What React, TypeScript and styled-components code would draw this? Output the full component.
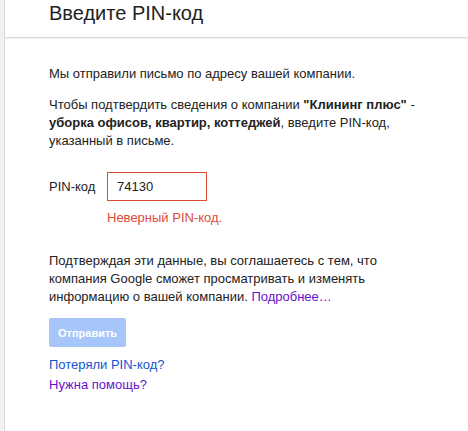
import React from "react";
import styled, { createGlobalStyle } from "styled-components";

const Global = createGlobalStyle`
  html, body { margin: 0; padding: 0; background: #fff; }
  body { font-family: Arial, "Liberation Sans", sans-serif; font-size: 13px; color: #222; }
`;

const Page = styled.div`
  display: flex;
  min-height: 431px;
`;

const SideStrip = styled.div`
  width: 4px;
  flex: none;
  background: #f1f1f1;
  border-right: 1px solid #d9d9d9;
`;

const Main = styled.div`
  flex: 1;
  display: flex;
  flex-direction: column;
`;

const Header = styled.div`
  height: 38px;
  border-bottom: 1px solid #dadada;
  box-shadow: 0 1px 0 #f2f2f2;
  padding-left: 44px;
  box-sizing: border-box;
`;

const Title = styled.h1`
  margin: 0;
  padding-top: 2px;
  font-size: 20px;
  font-weight: normal;
  color: #222;
  line-height: 23px;
`;

const Content = styled.div`
  padding: 27px 0 0 44px;
  max-width: 380px;
  line-height: 18px;
`;

const Para = styled.p<{ $mt?: number }>`
  margin: ${(p) => p.$mt ?? 0}px 0 0;
`;

const PinRow = styled.div`
  display: flex;
  align-items: center;
  margin-top: 22px;
`;

const PinLabel = styled.label`
  width: 58px;
`;

const PinInput = styled.div`
  width: 100px;
  height: 29px;
  box-sizing: border-box;
  border: 1px solid #dd4b39;
  padding: 0 9px;
  display: flex;
  align-items: center;
  color: #222;
`;

const ErrorText = styled.div`
  margin: 8px 0 0 58px;
  color: #dd4b39;
`;

const Link = styled.a<{ $visited?: boolean }>`
  color: ${(p) => (p.$visited ? "#61c" : "#15c")};
  text-decoration: none;
  cursor: pointer;
`;

const SubmitButton = styled.button`
  margin-top: 12px;
  height: 29px;
  padding: 0 8px;
  border: 1px solid #a6c6f7;
  border-radius: 2px;
  background: #a6c6fa;
  color: #fff;
  font-family: Arial, "Liberation Sans", sans-serif;
  font-size: 11px;
  font-weight: bold;
  display: block;
`;

const Links = styled.div`
  margin-top: 8px;
  display: flex;
  flex-direction: column;
  align-items: flex-start;
  line-height: 20px;
`;

export default function App() {
  return (
    <>
      <Global />
      <Page>
        <SideStrip />
        <Main>
          <Header>
            <Title>Введите PIN-код</Title>
          </Header>
          <Content>
            <Para>Мы отправили письмо по адресу вашей компании.</Para>
            <Para $mt={13}>
              Чтобы подтвердить сведения о компании <b>"Клининг плюс"</b> - <b>уборка офисов, квартир, коттеджей</b>,
              введите PIN-код, указанный в письме.
            </Para>
            <PinRow>
              <PinLabel>PIN-код</PinLabel>
              <PinInput>74130</PinInput>
            </PinRow>
            <ErrorText>Неверный PIN-код.</ErrorText>
            <Para $mt={25}>
              Подтверждая эти данные, вы соглашаетесь с тем, что компания Google сможет просматривать и изменять
              информацию о вашей компании. <Link $visited>Подробнее…</Link>
            </Para>
            <SubmitButton disabled>Отправить</SubmitButton>
            <Links>
              <Link>Потеряли PIN-код?</Link>
              <Link $visited>Нужна помощь?</Link>
            </Links>
          </Content>
        </Main>
      </Page>
    </>
  );
}
